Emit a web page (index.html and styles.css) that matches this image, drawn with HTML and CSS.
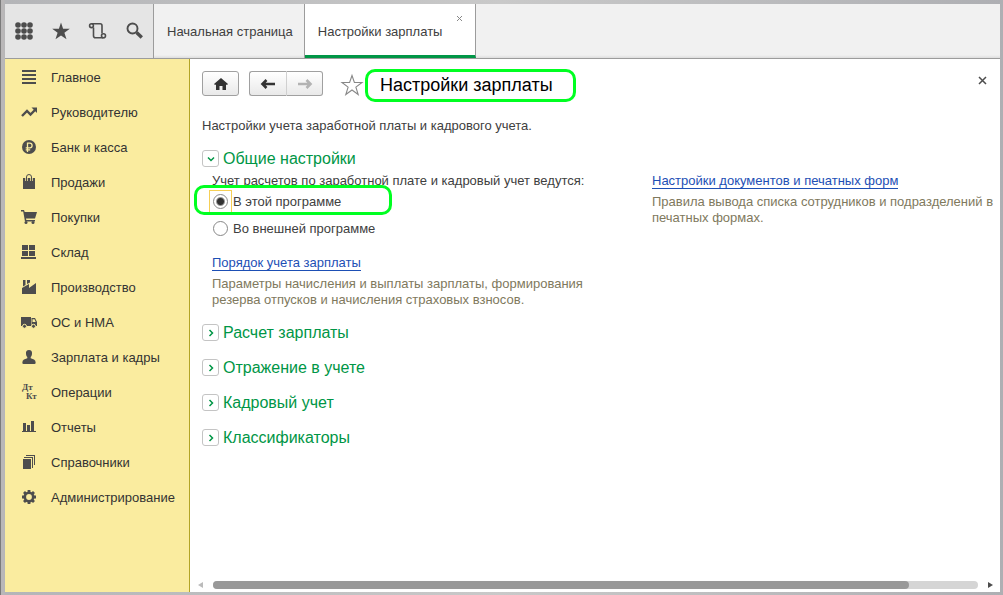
FILE: index.html
```html
<!DOCTYPE html>
<html lang="ru">
<head>
<meta charset="utf-8">
<title>Настройки зарплаты</title>
<link rel="stylesheet" href="styles.css">
</head>
<body>
<div class="window">
  <header class="topbar">
    <div class="tools">
      <button class="tool" aria-label="Меню"><svg width="20" height="20" viewBox="0 0 20 20"><g fill="#4d4d4d"><circle cx="4" cy="4" r="2.8"/><circle cx="10" cy="4" r="2.8"/><circle cx="16" cy="4" r="2.8"/><circle cx="4" cy="10" r="2.8"/><circle cx="10" cy="10" r="2.8"/><circle cx="16" cy="10" r="2.8"/><circle cx="4" cy="16" r="2.8"/><circle cx="10" cy="16" r="2.8"/><circle cx="16" cy="16" r="2.8"/></g></svg></button>
      <button class="tool" aria-label="Избранное"><svg width="20" height="20" viewBox="0 0 20 20"><path fill="#4d4d4d" d="M10 1.500l2.100 6.200h6.700l-5.400 4 2.100 6.600L10 14.400l-5.500 3.900 2.100-6.600-5.400-4h6.700z"/></svg></button>
      <button class="tool" aria-label="История"><svg width="20" height="20" viewBox="0 0 20 20"><g fill="none" stroke="#4d4d4d" stroke-width="1.600"><path d="M3.500 2.800h8.700q1.800 0 1.800 2v7.700M5.500 6.500v8.200q0 2 2 2h8"/><circle cx="3.500" cy="4.700" r="1.900"/><circle cx="15.500" cy="14.700" r="2"/></g></svg></button>
      <button class="tool" aria-label="Поиск"><svg width="20" height="20" viewBox="0 0 20 20"><circle cx="7.500" cy="7.500" r="5" fill="none" stroke="#4d4d4d" stroke-width="1.900"/><path d="M11.600 11.500l5.200 5" stroke="#4d4d4d" stroke-width="3.400"/></svg></button>
    </div>
    <nav class="tabs">
      <a class="tab" href="#">Начальная страница</a>
      <a class="tab active" href="#">Настройки зарплаты</a>
      <button class="tab-close" aria-label="Закрыть вкладку"><svg width="7" height="7" viewBox="0 0 7 7"><path d="M1 1l5 5M6 1L1 6" stroke="#888"/></svg></button>
    </nav>
  </header>
  <div class="body">
    <nav class="sidebar">
      <a class="item" href="#"><svg class="icon" viewBox="0 0 16 16"><path d="M1 1h14v2H1zM1 5h14v2H1zM1 9h14v2H1zM1 13h14v2H1z"/></svg>Главное</a>
      <a class="item" href="#"><svg class="icon" viewBox="0 0 16 16"><path d="M1 12l5-5 3.500 3.500L14 6" fill="none" stroke="#4d4d4d" stroke-width="2.400"/><path d="M10.500 3.500H16V9z"/></svg>Руководителю</a>
      <a class="item" href="#"><svg class="icon" viewBox="0 0 16 16"><circle cx="8" cy="8" r="7"/><path d="M6.500 13V4.200h2.300a2.300 2.300 0 010 4.600H4.700M4.700 10.900h4.500" fill="none" stroke="#faec9f" stroke-width="1.300"/></svg>Банк и касса</a>
      <a class="item" href="#"><svg class="icon" viewBox="0 0 16 16"><path d="M2 4h12v11H2z"/><path d="M5.500 7V3a2.500 2.500 0 015 0v4" fill="none" stroke="#faec9f" stroke-width="2.500"/><path d="M5.500 7V3a2.500 2.500 0 015 0v4" fill="none" stroke="#4d4d4d"/></svg>Продажи</a>
      <a class="item" href="#"><svg class="icon" viewBox="0 0 16 16"><path d="M0 1h3l.7 2H16l-2 6.500H5l.3 1.500H14v1.500H4L2.200 2.500H0z"/><circle cx="5" cy="13.500" r="1.500"/><circle cx="12" cy="13.500" r="1.500"/></svg>Покупки</a>
      <a class="item" href="#"><svg class="icon" viewBox="0 0 16 16"><path d="M1 1h6v5H1zM8 1h6v5H8zM1 7h6v5H1zM8 7h6v5H8zM0 13h15v2H0z"/></svg>Склад</a>
      <a class="item" href="#"><svg class="icon" viewBox="0 0 16 16"><path d="M1 15v-6l7-4v4l7-5v11zM2 1h2.500v5L2 7.500zM6 1h3v2.500L6 5z"/></svg>Производство</a>
      <a class="item" href="#"><svg class="icon" viewBox="0 0 16 16"><path d="M0 3h10v9H0zM10.500 4h3.500l2 4v4h-5.500z"/><path d="M11.500 5.300h2l1.200 2.700h-3.200z" fill="#faec9f"/><g stroke="#faec9f"><circle cx="3.500" cy="12.300" r="2"/><circle cx="12.500" cy="12.300" r="2"/></g></svg>ОС и НМА</a>
      <a class="item" href="#"><svg class="icon" viewBox="0 0 16 16"><path d="M8 1c2.300 0 3.300 1.500 3 4-.2 1.700-.7 2.500-1.300 3v1.300L13 10.500q1.700.8 1.700 3.500-.3 1-1.200 1h-11q-1 0-1.200-1 0-2.700 1.700-3.500l3.300-1.200V8C5.700 7.500 5.200 6.700 5 5c-.3-2.500.7-4 3-4z"/></svg>Зарплата и кадры</a>
      <a class="item" href="#"><svg class="icon" viewBox="0 0 16 16"><text class="glyph" x="1" y="6">Дт</text><text class="glyph" x="5" y="15">Кт</text></svg>Операции</a>
      <a class="item" href="#"><svg class="icon" viewBox="0 0 16 16"><path d="M2 4h3v8H2zM6 6h3v6H6zM10 2h3v10h-3zM1 12h14v1H1z"/></svg>Отчеты</a>
      <a class="item" href="#"><svg class="icon" viewBox="0 0 16 16"><path d="M2 5h8v10H2zM3 3h9v11h-1V4H3zM5 1h9v10h-1V2H5z"/></svg>Справочники</a>
      <a class="item" href="#"><svg class="icon" viewBox="0 0 16 16"><circle cx="8" cy="8" r="4.200" fill="none" stroke="#4d4d4d" stroke-width="2.600"/><path d="M8 1v2.500M8 12.500V15M1 8h2.500M12.500 8H15M3 3l1.800 1.800M11.200 11.200L13 13M13 3l-1.800 1.800M4.800 11.200L3 13" stroke="#4d4d4d" stroke-width="2.800"/></svg>Администрирование</a>
    </nav>
    <main class="content">
      <div class="heading-row">
        <button class="btn" aria-label="Домой"><svg width="16" height="14" viewBox="0 0 16 14"><path fill="#333" d="M8 1l7 6-1 1-1-.5V13H9.500V9h-3v4H3V7.500L2 8 1 7z"/></svg></button>
        <div class="btn-group">
          <button class="btn" aria-label="Назад"><svg width="16" height="12" viewBox="0 0 16 12"><path d="M15 6H3M6.500 2L2.500 6l4 4" fill="none" stroke="#333" stroke-width="2.600"/></svg></button>
          <button class="btn" aria-label="Вперед" disabled><svg width="16" height="12" viewBox="0 0 16 12"><path d="M1 6h12M9.500 2l4 4-4 4" fill="none" stroke="#b3b3b3" stroke-width="2.600"/></svg></button>
        </div>
        <button class="fav" aria-label="В избранное"><svg width="24" height="24" viewBox="0 0 24 24"><path d="M12 2.500l2.400 7H22l-6.100 4.600 2.300 7.400-6.200-4.500-6.200 4.500 2.300-7.400L2 9.500h7.600z" fill="#fff" stroke="#888" stroke-width="1.100"/></svg></button>
        <h1 class="title">Настройки зарплаты</h1>
        <button class="close" aria-label="Закрыть"><svg width="9" height="9" viewBox="0 0 9 9"><path d="M1 1l7 7M8 1L1 8" stroke="#4d4d4d" stroke-width="1.500"/></svg></button>
      </div>
      <p class="intro">Настройки учета заработной платы и кадрового учета.</p>
      <section>
        <h2 class="group"><button class="toggle" aria-label="Свернуть"><svg width="8" height="8" viewBox="0 0 8 8"><path d="M1 2.500l3 3 3-3"/></svg></button>Общие настройки</h2>
        <div class="columns">
          <div class="col">
            <fieldset class="radios">
              <legend class="legend">Учет расчетов по заработной плате и кадровый учет ведутся:</legend>
              <label class="option marked"><span class="focus"><input class="radio" type="radio" name="place" checked></span>В этой программе</label>
              <label class="option"><span class="focus off"><input class="radio" type="radio" name="place"></span>Во внешней программе</label>
            </fieldset>
            <a class="link" href="#">Порядок учета зарплаты</a>
            <p class="hint">Параметры начисления и выплаты зарплаты, формирования<br>резерва отпусков и начисления страховых взносов.</p>
          </div>
          <div class="col">
            <a class="link" href="#">Настройки документов и печатных форм</a>
            <p class="hint">Правила вывода списка сотрудников и подразделений в<br>печатных формах.</p>
          </div>
        </div>
      </section>
      <h2 class="group"><button class="toggle" aria-label="Развернуть"><svg width="8" height="8" viewBox="0 0 8 8"><path d="M2.500 1l3 3-3 3"/></svg></button>Расчет зарплаты</h2>
      <h2 class="group"><button class="toggle" aria-label="Развернуть"><svg width="8" height="8" viewBox="0 0 8 8"><path d="M2.500 1l3 3-3 3"/></svg></button>Отражение в учете</h2>
      <h2 class="group"><button class="toggle" aria-label="Развернуть"><svg width="8" height="8" viewBox="0 0 8 8"><path d="M2.500 1l3 3-3 3"/></svg></button>Кадровый учет</h2>
      <h2 class="group"><button class="toggle" aria-label="Развернуть"><svg width="8" height="8" viewBox="0 0 8 8"><path d="M2.500 1l3 3-3 3"/></svg></button>Классификаторы</h2>
      <div class="scroll">
        <svg width="5" height="6" viewBox="0 0 5 6"><path d="M5 0v6L0 3z" fill="#bbb"/></svg>
        <div class="track"><div class="thumb"></div></div>
        <svg width="5" height="6" viewBox="0 0 5 6"><path d="M0 0v6l5-3z" fill="#4d4d4d"/></svg>
      </div>
    </main>
  </div>
</div>
</body>
</html>
```
FILE: styles.css
```css
*, *::after { box-sizing: border-box; }
body {
  margin: 0;
  font: 13px/16px "Liberation Sans", Arial, sans-serif;
  color: #404040;
  background: linear-gradient(90deg, #7b7b7b 1px, #b9b7b8 1px, #b9b7b8 4px, #b4b5b8 5px, #c9c9c9 50%, #aeafb3);
}
button { margin: 0; padding: 0; border: 0; background: none; font: inherit; display: flex; align-items: center; justify-content: center; }
svg { display: block; flex: none; }
h1, h2, p { margin: 0; font-weight: normal; }
a { color: inherit; text-decoration: none; }

.window { min-height: 100vh; padding: 4px 3px 3px 5px; display: flex; flex-direction: column; }
.topbar { display: flex; height: 55px; background: linear-gradient(#f1f1f1 51px, #dedede); border-bottom: 1px solid #9c9c9c; }
.tools { display: flex; align-items: center; gap: 17px; padding: 0 8px 0 9px; background: #e5e5e5; border-right: 1px solid #9c9c9c; }
.tool { width: 20px; height: 20px; }
.tabs { display: flex; position: relative; }
.tab { display: flex; align-items: center; padding: 1px 11px 0 13px; border-right: 1px solid #9c9c9c; white-space: nowrap; }
.tab.active { background: #fff; padding: 4px 33px 0 13px; border-bottom: 3px solid #009646; }
.tab-close { position: absolute; top: 11px; right: 13px; }

.body { display: flex; flex: 1; }
.sidebar { width: 185px; flex: none; padding-top: 1px; background: #faec9f; border-right: 1px solid #b3a526; }
.item { display: flex; align-items: center; gap: 14px; height: 35px; padding-left: 16px; color: #333; }
.icon { width: 16px; height: 16px; margin-bottom: 1px; fill: #4d4d4d; overflow: visible; }
.glyph { font: bold 9px "Liberation Serif", serif; }

.content { flex: 1; min-width: 0; display: flex; flex-direction: column; padding: 10px 6px 3px 12px; background: #fff; }
.heading-row { display: flex; align-items: flex-start; height: 33px; }
.btn { width: 37px; height: 25px; margin-top: 2px; border: 1px solid #a0a0a0; border-radius: 3px; background: linear-gradient(#fff, #e9e9e9); }
.btn-group { display: flex; margin: 0 17px 0 10px; }
.btn-group .btn:first-child { width: 38px; border-radius: 3px 0 0 3px; border-right-color: #d0d0d0; }
.btn-group .btn:last-child { width: 36px; border-radius: 0 3px 3px 0; border-left: 0; }
.fav { margin-top: 4px; }
.title { margin-left: 1px; padding: 0 20px 0 12px; height: 33px; border: 3px solid #00ff21; border-radius: 10px; font-size: 18px; line-height: 27px; color: #000; white-space: nowrap; }
.close { margin: 7px 7px 0 auto; }
.intro { margin: 16px 0 16px; }

.group { display: flex; align-items: center; gap: 4px; height: 17px; margin-bottom: 18px; font-size: 16px; line-height: 18px; color: #009646; }
section .group { margin-bottom: 6px; }
.toggle { width: 17px; height: 17px; border: 1px solid #c4c4c4; border-radius: 3px; }
.toggle path { fill: none; stroke: #009646; stroke-width: 1.5; }
.columns { display: grid; grid-template-columns: 440px 1fr; margin-bottom: 16px; padding-left: 10px; white-space: nowrap; }
.radios { margin: 0 0 15px; padding: 0; border: 0; }
.legend { padding: 0 0 1px; }
.option { display: flex; align-items: center; height: 23px; position: relative; width: max-content; }
.option + .option { margin-top: 4px; }
.focus { display: flex; align-items: center; justify-content: center; width: 23px; height: 23px; margin: 0 1px 0 -3px; border: 1px solid #f6cf55; }
.focus.off { border-color: transparent; }
.radio { appearance: none; margin: 0; flex: none; width: 15px; height: 15px; border: 1px solid #888; border-radius: 50%; background: #fff; }
.radio:checked { background: radial-gradient(circle, #333 3px, #fff 5px); }
.marked::after { content: ""; position: absolute; left: -18px; top: -5px; width: 198px; height: 30px; border: 3px solid #00ff21; border-radius: 10px; }
.link { display: inline-block; height: 16px; color: #1d4fb5; border-bottom: 1px solid #1d4fb5; }
.hint { margin-top: 5px; color: #80795d; }

.scroll { display: flex; align-items: center; gap: 10px; margin: auto 1px 0 -4px; }
.track { flex: 1; height: 8px; border-radius: 4px; background: #d5d5d5; }
.thumb { width: 91%; height: 8px; border-radius: 4px; background: #999; }
```
